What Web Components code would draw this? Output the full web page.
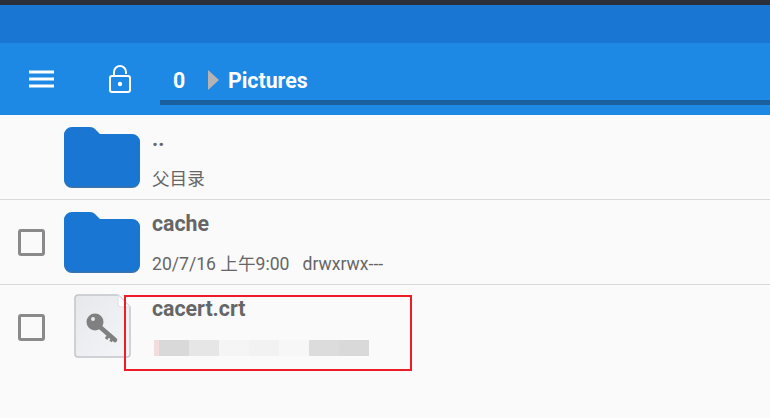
<!doctype html>
<html>
<head>
<meta charset="utf-8">
<style>
  html, body { margin: 0; height: 100%; }
  body { width: 770px; height: 418px; overflow: hidden; background: #fafafa; font-family: Roboto, "Noto Sans CJK SC", sans-serif; position: relative; }
</style>
</head>
<body>
<app-statusbar></app-statusbar>
<app-toolbar path-index="0" path-name="Pictures"></app-toolbar>
<file-list>
  <file-row icon="folder" name=".." no-check>父目录</file-row>
  <file-row icon="folder" name="cache">20/7/16 上午9:00&nbsp;&nbsp; drwxrwx---</file-row>
  <file-row icon="key" name="cacert.crt" no-border><mosaic-strip></mosaic-strip></file-row>
</file-list>
<mark-box></mark-box>

<script>
class AppStatusbar extends HTMLElement {
  constructor() {
    super();
    this.attachShadow({ mode: 'open' });
    this.shadowRoot.innerHTML = `
      <style>
        :host { display: block; height: 43px; background: #1976d2; border-top: 5px solid #2b2f3b; box-sizing: border-box; }
      </style>`;
  }
}

class AppToolbar extends HTMLElement {
  constructor() {
    super();
    this.attachShadow({ mode: 'open' });
  }

  connectedCallback() {
    this.shadowRoot.innerHTML = `
      <style>
        :host { display: flex; height: 72px; background: #1e88e5; color: #fff; font: 700 21.3px Roboto, sans-serif; }
        .menu { width: 84px; display: flex; align-items: center; justify-content: center; }
        .lock { width: 76px; padding-right: 4px; box-sizing: border-box; display: flex; align-items: center; justify-content: center; }
        .path { flex: 1; height: 62px; padding-top: 17px; box-sizing: border-box; border-bottom: 5px solid #1a5f9e; display: flex; align-items: center; }
        .index { width: 48px; padding-left: 13px; box-sizing: border-box; }
        .arrow { width: 0; height: 0; border-left: 11px solid #b4b4b4; border-top: 10px solid transparent; border-bottom: 10px solid transparent; margin-right: 9px; }
        svg { display: block; }
      </style>
      <div class="menu">
        <svg width="26" height="18" viewBox="0 0 26 18"><path d="M0 2h25M0 9h25M0 16h25" stroke="#fff" stroke-width="3" fill="none"/></svg>
      </div>
      <div class="lock">
        <svg width="22" height="28" viewBox="0 0 22 28" fill="none" stroke="#fff" stroke-width="2">
          <rect x="1" y="11" width="20" height="16" rx="2"/>
          <path d="M5 11V7a6 6 0 0 1 12 0v2"/>
          <circle cx="11" cy="19" r="2.200" fill="#fff" stroke="none"/>
        </svg>
      </div>
      <div class="path">
        <span class="index">${this.getAttribute('path-index')}</span>
        <span class="arrow"></span>
        <span>${this.getAttribute('path-name')}</span>
      </div>`;
  }
}

class FileList extends HTMLElement {
  constructor() {
    super();
    this.attachShadow({ mode: 'open' });
    this.shadowRoot.innerHTML = `
      <style>:host { display: block; }</style>
      <slot></slot>`;
  }
}

const ICONS = {
  folder: `<svg width="78" height="64" viewBox="0 0 78 64">
      <path d="M8 1h18q3 0 5 2L36 8h32a8 8 0 0 1 8 8v37a8 8 0 0 1-8 8H8a8 8 0 0 1-8-8V9a8 8 0 0 1 8-8z" fill="#1a5a9e" opacity=".85"/>
      <path d="M8 0h18q3 0 5 2L36 7h32a8 8 0 0 1 8 8v36.500a8 8 0 0 1-8 8H8a8 8 0 0 1-8-8V8a8 8 0 0 1 8-8z" fill="#1976d2"/>
    </svg>`,
  key: `<svg width="58" height="64" viewBox="0 0 58 64">
      <defs><linearGradient id="paper" x1="0" y1="0" x2="1" y2="1"><stop offset="0" stop-color="#e6e8ec"/><stop offset="1" stop-color="#f4f5f7"/></linearGradient></defs>
      <path d="M4 1h40l12 12v47a3 3 0 0 1-3 3H4a3 3 0 0 1-3-3V4a3 3 0 0 1 3-3z" fill="url(#paper)" stroke="#c2c5ca" stroke-width="1.500"/>
      <path d="M44 1v9a3 3 0 0 0 3 3h9z" fill="#fff" stroke="#dcdee1"/>
      <circle cx="21" cy="28" r="8.500" fill="#808080"/>
      <circle cx="19" cy="25" r="2" fill="#e6e8ec"/>
      <path d="M26 33l15 13" stroke="#808080" stroke-width="4.500" stroke-linecap="round"/>
      <path d="M35 41l-3 4M39 44l-2.500 3.500" stroke="#808080" stroke-width="3"/>
    </svg>`
};

class FileRow extends HTMLElement {
  constructor() {
    super();
    this.attachShadow({ mode: 'open' });
  }

  connectedCallback() {
    const icon = this.getAttribute('icon');
    this.shadowRoot.innerHTML = `
      <style>
        :host { display: flex; height: 85px; box-sizing: border-box; border-bottom: 1px solid #d9d9d9; color: #666; }
        :host([no-border]) { border-bottom: 0; }
        .check { width: 64px; display: flex; align-items: center; padding-left: 18px; box-sizing: border-box; }
        .check i { width: 27px; height: 27px; box-sizing: border-box; border: 3px solid #8a8a8a; border-radius: 3px; }
        :host([no-check]) .check i { visibility: hidden; }
        .icon { width: 88px; padding-top: 12px; box-sizing: border-box; }
        .icon.key { padding: 9px 0 0 10px; }
        .text { flex: 1; display: flex; flex-direction: column; }
        .name { font: 700 21.3px/24px Roboto, sans-serif; margin-top: 12px; }
        .sub { font: 17.6px/22px Roboto, "Noto Sans CJK SC", sans-serif; margin-top: 17px; }
        svg { display: block; }
      </style>
      <div class="check"><i></i></div>
      <div class="icon ${icon}">${ICONS[icon]}</div>
      <div class="text">
        <div class="name">${this.getAttribute('name')}</div>
        <div class="sub"><slot></slot></div>
      </div>`;
  }
}

// pixelated redaction over the date of the last row
class MosaicStrip extends HTMLElement {
  constructor() {
    super();
    this.attachShadow({ mode: 'open' });
    const cells = ['#d9d9d9', '#e6e6e6', '#f5f5f5', '#f2f2f2', '#f7f7f7', '#dcdcdc', '#d9d9d9'];
    this.shadowRoot.innerHTML = `
      <style>
        :host { display: flex; height: 16px; margin: 2px 0 0 2px; }
        .pink { width: 5px; background: #f3dcdc; }
        .cell { width: 30px; }
      </style>
      <div class="pink"></div>
      ${cells.map(c => `<div class="cell" style="background:${c}"></div>`).join('')}`;
  }
}

class MarkBox extends HTMLElement {
  constructor() {
    super();
    this.attachShadow({ mode: 'open' });
    this.shadowRoot.innerHTML = `
      <style>
        :host { position: absolute; left: 124px; top: 295px; width: 288px; height: 76px; box-sizing: border-box; border: 2px solid #ee1c25; }
      </style>`;
  }
}

customElements.define('app-statusbar', AppStatusbar);
customElements.define('app-toolbar', AppToolbar);
customElements.define('file-list', FileList);
customElements.define('file-row', FileRow);
customElements.define('mosaic-strip', MosaicStrip);
customElements.define('mark-box', MarkBox);
</script>
</body>
</html>
